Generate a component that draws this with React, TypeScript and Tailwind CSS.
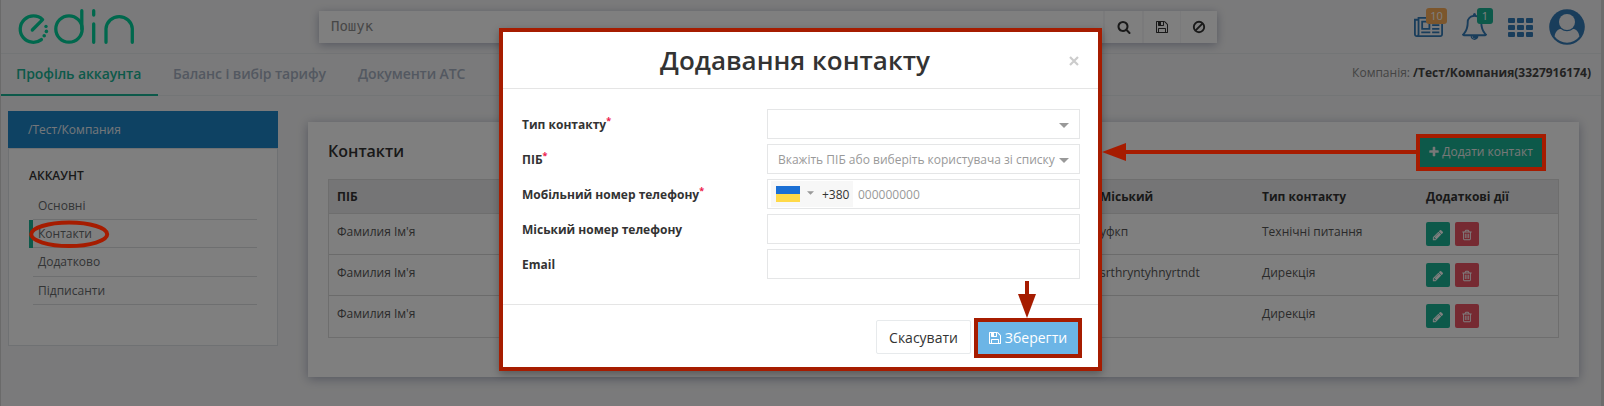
import React from "react";

const ICONS = {
  newspaper:
    "M1024 512h-384v384h384v-384zM1152 1152v128h-640v-128h640zM1152 384v640h-640v-640h640zM1792 1152v128h-512v-128h512zM1792 896v128h-512v-128h512zM1792 640v128h-512v-128h512zM1792 384v128h-512v-128h512zM256 1344v-960h-128v960q0 26 19 45t45 19 45-19 19-45zM1920 1344v-1088h-1536v1088q0 33-11 64h1483q26 0 45-19t19-45zM2048 128v1216q0 80-56 136t-136 56h-1664q-80 0-136-56t-56-136v-1088h256v-128h1792z",
  bell: "M912 1696q0-16-16-16-59 0-101.5-42.5t-42.5-101.5q0-16-16-16t-16 16q0 73 51.5 124.5t124.5 51.5q16 0 16-16zm-666-288h1300q-266-300-266-832 0-51-24-105t-69-103-121.5-80.5-169.5-31.5-169.5 31.5-121.5 80.5-69 103-24 105q0 532-266 832zm1482 0q0 52-38 90t-90 38h-448q0 106-75 181t-181 75-181-75-75-181h-448q-52 0-90-38t-38-90q50-42 91-88t85-119.5 74.5-158.5 50-206 19.5-260q0-152 117-282.5t307-158.5q-8-19-8-39 0-40 28-68t68-28 68 28 28 68q0 20-8 39 190 28 307 158.5t117 282.5q0 139 19.5 260t50 206 74.5 158.5 85 119.5 91 88z",
  save: "M512 1536h768v-384h-768v384zm896 0h128v-896q0-14-10-38.5t-20-34.5l-281-281q-10-10-34-20t-39-10v416q0 40-28 68t-68 28h-576q-40 0-68-28t-28-68v-416h-128v1280h128v-416q0-40 28-68t68-28h832q40 0 68 28t28 68v416zm-384-928v-320q0-13-9.5-22.5t-22.5-9.5h-192q-13 0-22.5 9.5t-9.5 22.5v320q0 13 9.5 22.5t22.5 9.5h192q13 0 22.5-9.5t9.5-22.5zm640 32v928q0 40-28 68t-68 28h-1344q-40 0-68-28t-28-68v-1344q0-40 28-68t68-28h928q40 0 88 20t76 48l280 280q28 28 48 76t20 88z",
  search:
    "M1216 832q0-185-131.5-316.5t-316.5-131.5-316.5 131.5-131.5 316.5 131.5 316.5 316.5 131.5 316.5-131.5 131.5-316.5zm512 832q0 52-38 90t-90 38q-54 0-90-38l-343-342q-179 124-399 124-143 0-273.5-55.5t-225-150-150-225-55.5-273.5 55.5-273.5 150-225 225-150 273.5-55.5 273.5 55.5 225 150 150 225 55.5 273.5q0 220-124 399l343 343q37 37 37 90z",
  trash:
    "M704 736v576q0 14-9 23t-23 9h-64q-14 0-23-9t-9-23v-576q0-14 9-23t23-9h64q14 0 23 9t9 23zm256 0v576q0 14-9 23t-23 9h-64q-14 0-23-9t-9-23v-576q0-14 9-23t23-9h64q14 0 23 9t9 23zm256 0v576q0 14-9 23t-23 9h-64q-14 0-23-9t-9-23v-576q0-14 9-23t23-9h64q14 0 23 9t9 23zm128 724v-948h-896v948q0 22 7 40.5t14.5 27 10.5 8.5h832q3 0 10.5-8.5t14.5-27 7-40.5zm-672-1076h448l-48-117q-7-9-17-11h-317q-10 2-17 11zm928 32v64q0 14-9 23t-23 9h-96v948q0 83-47 143.5t-113 60.5h-832q-66 0-113-58.5t-47-141.5v-952h-96q-14 0-23-9t-9-23v-64q0-14 9-23t23-9h309l70-167q15-37 54-63t79-26h320q40 0 79 26t54 63l70 167h309q14 0 23 9t9 23z",
  pencil:
    "M491 1536l91-91-235-235-91 91v107h128v128h107zm523-928q0-22-22-22-10 0-17 7l-542 542q-7 7-7 17 0 22 22 22 10 0 17-7l542-542q7-7 7-17zm-54-192l416 416-832 832h-416v-416zm683 96q0 53-37 90l-166 166-416-416 166-165q36-38 90-38 53 0 91 38l235 234q37 39 37 91z",
  plus: "M1600 736v192q0 40-28 68t-68 28h-416v416q0 40-28 68t-68 28h-192q-40 0-68-28t-28-68v-416h-416q-40 0-68-28t-28-68v-192q0-40 28-68t68-28h416v-416q0-40 28-68t68-28h192q40 0 68 28t28 68v416h416q40 0 68 28t28 68z",
};

function Icon({ name, className, box = "0 0 1792 1792" }: { name: keyof typeof ICONS; className: string; box?: string }) {
  return (
    <svg viewBox={box} className={className} fill="currentColor">
      <path d={ICONS[name]} />
    </svg>
  );
}

function Logo() {
  return (
    <svg width="120" height="40" viewBox="16 7 120 40" fill="none" stroke="#00d09a" strokeWidth="3.3" strokeLinecap="round">
      <path d="M32.3 30 L42.6 19.6 A13.2 13.2 0 1 0 41.4 39.6" strokeLinejoin="round" />
      <circle cx="69" cy="29" r="13.2" />
      <path d="M81.8 10.7V29M93.7 10.7V15M93.7 24V42.3M106 42.3V28.6a13.2 13.2 0 0 1 26.3 0V42.3" />
      <g fill="#00d09a" stroke="none">
        <circle cx="46" cy="26.4" r="1.7" />
        <circle cx="46.4" cy="31.4" r="1.8" />
        <circle cx="44.2" cy="35.8" r="1.8" />
      </g>
    </svg>
  );
}

function TopBar() {
  return (
    <header className="flex h-[54px] shrink-0 border-b border-[#e7eaec] pl-[15px]">
      <div className="w-[303px] pt-[7px]">
        <Logo />
      </div>
      <div className="mt-[11px] flex h-8 w-[898px] gap-px shadow-[0_2px_10px_rgba(60,70,110,0.4)]">
        <div className="flex-1 bg-white pl-3 font-['DejaVu_Sans_Mono','Liberation_Mono',monospace] text-[14px] leading-[31px] text-[#8f8f8f]">
          Пошук
        </div>
        <div className="ml-px flex w-[37px] items-center justify-center bg-white text-[#333]">
          <Icon name="search" className="size-[14px]" />
        </div>
        <div className="ml-px flex w-9 items-center justify-center bg-white text-[#333]">
          <Icon name="save" className="size-[14px]" />
        </div>
        <div className="flex w-9 items-center justify-center bg-white text-[#333]">
          <svg viewBox="0 0 14 14" className="size-[14px]" fill="none" stroke="currentColor" strokeWidth="1.9">
            <circle cx="7" cy="7" r="5.2" />
            <path d="M3.4 10.6 10.6 3.4" />
          </svg>
        </div>
      </div>
      <div className="relative ml-[197px] mt-[17px] h-5 w-[29px] text-[#337ab7]">
        <Icon name="newspaper" box="0 128 2048 1408" className="h-5 w-[29px]" />
        <span className="absolute -top-[9px] left-[12px] h-4 w-[21px] rounded-[3px] bg-[#f8ac59] text-center text-[11px] leading-4 text-white">10</span>
      </div>
      <div className="relative ml-[18px] mt-[13px] size-[27px] text-[#337ab7]">
        <Icon name="bell" className="size-[27px]" />
        <span className="absolute -top-[5px] left-[16px] h-4 w-4 rounded-[3px] bg-[#1ab394] text-center text-[11px] leading-4 text-white">1</span>
      </div>
      <svg viewBox="0 0 25 19" className="ml-[20px] mt-[18px] h-[19px] w-[25px]" fill="#337ab7">
        {[0, 9, 18].map((x) =>
          [0, 7, 14].map((y) => <rect key={`${x}-${y}`} x={x} y={y} width="7" height="5" rx="1" />),
        )}
      </svg>
      <svg viewBox="0 0 36 36" className="ml-[16px] mt-[8.5px] size-9">
        <circle cx="18" cy="18" r="17.8" fill="#337ab7" />
        <path d="M5.6 27.5C6.2 22.5 9 20 12 20c3.500 3 8.500 3 12 0 3 0 5.800 2.500 6.400 7.500a15.500 15.500 0 0 1-24.800 0z" fill="#f3f3f4" />
        <circle cx="18" cy="13" r="8" fill="#f3f3f4" />
      </svg>
    </header>
  );
}

function Tabs() {
  return (
    <nav className="flex h-[42px] shrink-0 border-b border-[#e7eaec] text-[14px] font-semibold leading-[40px] tracking-[-0.1px] text-[#a7b1c2]">
      <div className="-mb-px h-[42px] w-[157px] border-b-2 border-[#1ab394] pl-[15px] text-[#1ab394]">Профіль аккаунта</div>
      <div className="ml-[15px] w-[185px]">Баланс і вибір тарифу</div>
      <div className="w-[140px]">Документи АТС</div>
      <div>Користувачі</div>
      <div className="ml-auto pr-[10px] text-[12px] font-normal leading-[38px] tracking-normal text-[#676a6c]">
        <span className="text-[#888]">Компанія:</span> <b className="text-[#444]">/Тест/Компания(3327916174)</b>
      </div>
    </nav>
  );
}

function Sidebar() {
  const items = ["Основні", "Контакти", "Додатково", "Підписанти"];
  return (
    <aside className="ml-[7px] mt-[15px] w-[270px] text-[12px]">
      <div className="h-[37px] bg-[#1c84c6] pl-5 leading-[37px] text-[#e8eef4]">/Тест/Компания</div>
      <div className="h-[198px] border border-[#dfe2e6] bg-white pl-[20px] pr-[20px] pt-[18px]">
        <div className="h-4 font-semibold leading-[17px] text-[#333]">АККАУНТ</div>
        <ul className="mt-[9px] text-[#676a6c]">
          {items.map((t) => (
            <li key={t} className={t === "Контакти" ? "border-l-4 border-[#1ab394]" : "pl-1"}>
              <div
                className={`border-b border-[#dcdfe1] pl-[5px] leading-[27px] ${t === "Додатково" ? "h-[29px]" : "h-7"}`}
              >
                {t}
              </div>
            </li>
          ))}
        </ul>
      </div>
    </aside>
  );
}

function ContactsCard() {
  const rows = [
    ["Фамилия Ім'я", "уфкп", "Технічні питання"],
    ["Фамилия Ім'я", "srthryntyhnyrtndt", "Дирекція"],
    ["Фамилия Ім'я", "", "Дирекція"],
  ];
  return (
    <main className="ml-[30px] mt-[26px] h-[255px] w-[1271px] bg-white px-5 shadow-[0_2px_10px_rgba(60,70,110,0.4)]">
      <div className="flex h-[57px] items-start justify-between">
        <h2 className="mt-[17px] text-[16px] font-semibold leading-6 text-[#333]">Контакти</h2>
        <div className="mr-[17px] mt-[15px] flex h-[30px] w-[122px] items-center justify-center gap-[2px] bg-[#1ab394] pr-px text-[12px] text-[#f0f0f0]">
          <Icon name="plus" className="size-[12px]" />
          Додати контакт
        </div>
      </div>
      <div className="border border-[#ddd] text-[12px] text-[#555]">
        <div className="flex h-[34px] border-b border-[#ddd] bg-[#ebebec] pl-2 font-bold leading-[33px] text-[#333]">
          <div className="w-[763px]">ПІБ</div>
          <div className="w-[162px]">Міський</div>
          <div className="w-[164px]">Тип контакту</div>
          <div>Додаткові дії</div>
        </div>
        {rows.map((r, i) => (
          <div key={i} className={`flex h-[41px] pl-2 ${i < 2 ? "border-b border-[#d6d6d6]" : ""}`}>
            <div className="w-[763px] pt-[9px] leading-[17px]">{r[0]}</div>
            <div className="w-[162px] pt-[9px] leading-[17px]">{r[1]}</div>
            <div className="w-[164px] pt-[9px] leading-[17px]">{r[2]}</div>
            <div className="flex gap-[5px] pt-2 text-white">
              <div className="flex size-6 items-center justify-center rounded-[2px] bg-[#1ab394] pt-px">
                <Icon name="pencil" className="size-[12px]" />
              </div>
              <div className="flex size-6 items-center justify-center rounded-[2px] bg-[#ed5565] pt-px">
                <Icon name="trash" className="size-[12px]" />
              </div>
            </div>
          </div>
        ))}
      </div>
    </main>
  );
}

function Label({ text, required }: { text: string; required?: boolean }) {
  return (
    <div className="flex w-[245px] text-[12px] font-bold leading-[32px] text-[#333]">
      {text}
      {required && <span className="-mt-[4px] text-[9px] font-bold text-[#ed1a4b]">*</span>}
    </div>
  );
}

function Caret({ className }: { className: string }) {
  return (
    <svg viewBox="0 0 10 5" className={className} fill="#999">
      <path d="M0 0h10L5 5z" />
    </svg>
  );
}

const FIELD = "flex h-[30px] w-[313px] items-center border border-[#e5e6e7] bg-white text-[12px] text-[#999]";

function ContactModal() {
  return (
    <div className="absolute left-[499px] top-7 flex h-[343px] w-[603px] flex-col border-4 border-[#a61c00] bg-white shadow-[0_3px_8px_rgba(0,0,0,0.3)]">
      <div className="relative h-[57px] border-b border-[#e5e5e5] text-center">
        <h1 className="pr-[11px] text-[26px] font-semibold leading-[57px] text-[#333]">Додавання контакту</h1>
        <svg viewBox="0 0 10 10" className="absolute right-[19px] top-[24px] size-[10px]" stroke="#ccc" strokeWidth="2.2">
          <path d="M1 1l8 8M9 1l-8 8" />
        </svg>
      </div>
      <div className="flex h-[216px] flex-col gap-[5px] border-b border-[#e5e5e5] pl-[19px] pt-5">
        <div className="flex h-[30px]">
          <Label text="Тип контакту" required />
          <div className={FIELD}>
            <Caret className="ml-auto mr-[10px] mt-[2px] h-[5px] w-[10px]" />
          </div>
        </div>
        <div className="flex h-[30px]">
          <Label text="ПІБ" required />
          <div className={FIELD}>
            <span className="pl-[10px] pt-px">Вкажіть ПІБ або виберіть користувача зі списку</span>
            <Caret className="ml-auto mr-[10px] mt-[2px] h-[5px] w-[10px]" />
          </div>
        </div>
        <div className="flex h-[30px]">
          <Label text="Мобільний номер телефону" required />
          <div className={FIELD}>
            <div className="ml-[3px] flex h-[26px] w-[82px] items-center bg-[#f7f7f7] pl-[5px]">
              <div className="h-4 w-6 border-b-[8px] border-[#ffd948] bg-[#1b6fd4]" />
              <Caret className="-mt-[3px] ml-[7px] h-1 w-[7px]" />
              <span className="ml-[8px] pt-px text-[#333]">+380</span>
            </div>
            <span className="pl-[5px] pt-px">000000000</span>
          </div>
        </div>
        <div className="flex h-[30px]">
          <Label text="Міський номер телефону" />
          <div className={FIELD} />
        </div>
        <div className="flex h-[30px]">
          <Label text="Email" />
          <div className={FIELD} />
        </div>
      </div>
      <div className="flex justify-end pr-4 text-[14px]">
        <div className="mr-[3px] mt-[15px] flex h-[34px] w-[95px] items-center justify-center rounded-[2px] border border-[#e7eaec] text-[#333]">
          Скасувати
        </div>
        <div className="mt-[13px] flex h-10 w-[108px] items-center justify-center gap-[3px] border-4 border-[#a61c00] bg-[#6cb5e6] pb-px pr-px text-white">
          <Icon name="save" className="size-[14px]" />
          Зберегти
        </div>
      </div>
    </div>
  );
}

export default function App() {
  return (
    <div className="relative h-[406px] w-[1604px] overflow-hidden bg-[#f5f5f6] font-['Open_Sans','Noto_Sans',sans-serif]">
      <div className="flex h-[406px] flex-col border-l border-[#d5d5d5] pr-[3px]">
        <TopBar />
        <Tabs />
        <div className="flex">
          <Sidebar />
          <ContactsCard />
        </div>
      </div>
      <div className="absolute right-0 top-0 h-full w-[3px] bg-[#d8d8d8]" />
      <div className="absolute inset-0 bg-black/50" />
      <ContactModal />
      <div className="absolute left-[1416px] top-[134px] h-[37px] w-[130px] border-4 border-[#a61c00]" />
      <svg className="absolute left-0 top-0" width="1604" height="406" fill="none">
        <path d="M1126 152H1417" stroke="#a61c00" strokeWidth="4" />
        <path d="M1102 152l24-9v18z" fill="#a61c00" />
        <path d="M1027 281V296" stroke="#a61c00" strokeWidth="4" />
        <path d="M1027 318l-9-24h18z" fill="#a61c00" />
        <ellipse cx="69.200" cy="234.300" rx="38" ry="11.700" stroke="#a61c00" strokeWidth="4" />
      </svg>
    </div>
  );
}
